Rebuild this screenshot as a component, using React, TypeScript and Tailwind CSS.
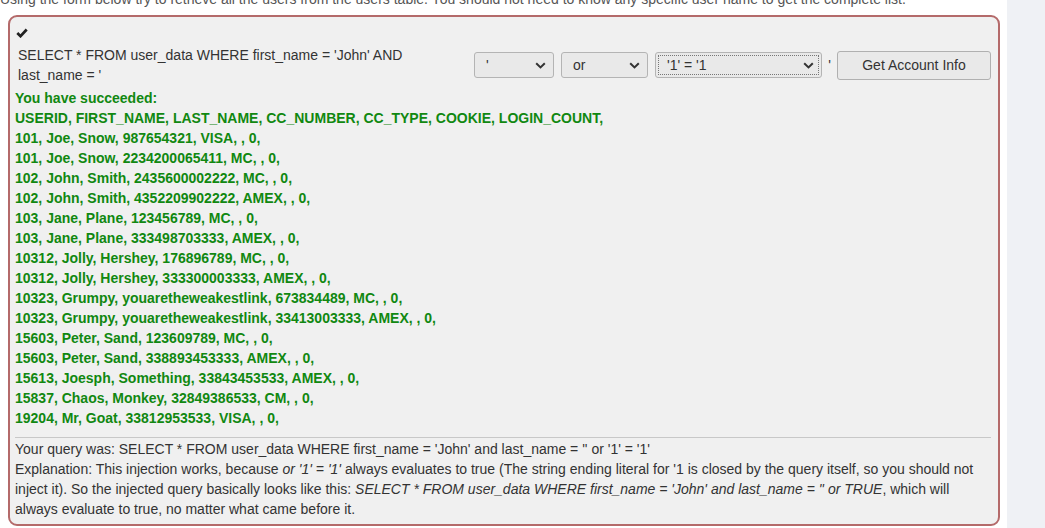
import React from "react";

const rows = [
  "USERID, FIRST_NAME, LAST_NAME, CC_NUMBER, CC_TYPE, COOKIE, LOGIN_COUNT,",
  "101, Joe, Snow, 987654321, VISA, , 0,",
  "101, Joe, Snow, 2234200065411, MC, , 0,",
  "102, John, Smith, 2435600002222, MC, , 0,",
  "102, John, Smith, 4352209902222, AMEX, , 0,",
  "103, Jane, Plane, 123456789, MC, , 0,",
  "103, Jane, Plane, 333498703333, AMEX, , 0,",
  "10312, Jolly, Hershey, 176896789, MC, , 0,",
  "10312, Jolly, Hershey, 333300003333, AMEX, , 0,",
  "10323, Grumpy, youaretheweakestlink, 673834489, MC, , 0,",
  "10323, Grumpy, youaretheweakestlink, 33413003333, AMEX, , 0,",
  "15603, Peter, Sand, 123609789, MC, , 0,",
  "15603, Peter, Sand, 338893453333, AMEX, , 0,",
  "15613, Joesph, Something, 33843453533, AMEX, , 0,",
  "15837, Chaos, Monkey, 32849386533, CM, , 0,",
  "19204, Mr, Goat, 33812953533, VISA, , 0,",
];

function Chevron() {
  return (
    <svg width="11" height="7" viewBox="0 0 11 7" className="shrink-0">
      <path d="M1.2 1.2 L5.5 5.4 L9.8 1.2" fill="none" stroke="#333" strokeWidth="2" />
    </svg>
  );
}

function FakeSelect({ label, width, focused }: { label: string; width: string; focused?: boolean }) {
  return (
    <div className={`${width} h-[26px] rounded-[3px] border border-[#b4b4b4] bg-[#e9e9e9] p-[2px]`}>
      <div
        className={`h-full flex items-center justify-between pl-[8px] pr-[4px] ${
          focused ? "border border-dotted border-[#777]" : "border border-transparent"
        }`}
      >
        <span className="text-[14px] text-[#333]">{label}</span>
        <Chevron />
      </div>
    </div>
  );
}

export default function App() {
  return (
    <div className="flex w-[1045px] h-[528px] overflow-hidden bg-white font-['Liberation_Sans',Arial,sans-serif] text-[14px] leading-[20px] text-[#333]">
      <div className="w-[1007px] shrink-0">
        <p className="-mt-[11px] text-[#555] whitespace-nowrap">
          Using the form below try to retrieve all the users from the users table. You should not need to know any specific user name to get the complete list.
        </p>
        <div className="ml-[8px] mt-[6px] w-[992px] rounded-[9px] border-2 border-[#b46a6a] bg-[#f0f0f0] px-[5px] pb-[5px] pt-[9px]">
          <div className="pl-[1px] h-[14px] flex items-center">
            <svg width="12" height="10" viewBox="0 0 12 10">
              <path d="M1.3 5 L4.5 8.2 L10.7 1.5" fill="none" stroke="#222" strokeWidth="2.7" />
            </svg>
          </div>
          <div className="flex items-center mt-[5px]">
            <div className="w-[420px] pl-[3px]">
              SELECT * FROM user_data WHERE first_name = 'John' AND last_name = '
            </div>
            <div className="ml-auto flex items-center pr-[2px]">
              <FakeSelect label="'" width="w-[80px]" />
              <div className="w-[7px]" />
              <FakeSelect label="or" width="w-[87px]" />
              <div className="w-[7px]" />
              <FakeSelect label="'1' = '1" width="w-[167px]" focused />
              <span className="w-[15px] text-center">'</span>
              <button className="h-[29px] w-[154px] rounded-[3px] border border-[#b0b0b0] bg-[#e9e9e9] text-[14px] text-[#333]">
                Get Account Info
              </button>
            </div>
          </div>
          <div className="font-bold text-[#118811] mt-[3px]">
            <div>You have succeeded:</div>
            {rows.map((r, i) => (
              <div key={i}>{r}</div>
            ))}
          </div>
          <div className="mt-[9px] h-px bg-[#c8c8c8] mr-[2px]" />
          <div className="pt-[1px] pr-[10px]">
            <div>Your query was: SELECT * FROM user_data WHERE first_name = 'John' and last_name = '' or '1' = '1'</div>
            <div>
              Explanation: This injection works, because <i>or '1' = '1'</i> always evaluates to true (The string ending
              literal for '1 is closed by the query itself, so you should not inject it). So the injected query basically
              looks like this: <i>SELECT * FROM user_data WHERE first_name = 'John' and last_name = '' or TRUE</i>, which
              will always evaluate to true, no matter what came before it.
            </div>
          </div>
        </div>
      </div>
      <div className="flex-1 bg-[#eff1f5]" />
    </div>
  );
}
